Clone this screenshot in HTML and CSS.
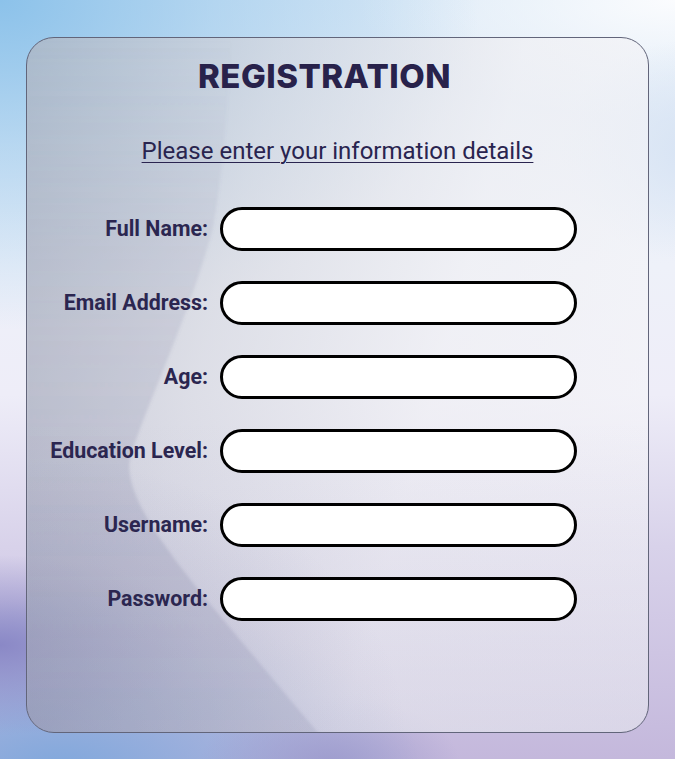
FILE: index.html
```html
<!DOCTYPE html>
<html>
<head>
<meta charset="utf-8">
<link rel="stylesheet" href="styles.css">
</head>
<body>
<div class="page">
  <div class="card">
    <svg class="decor" width="623" height="696" viewBox="0 0 623 696" aria-hidden="true">
      <defs>
        <linearGradient id="fade" x1="0" y1="0" x2="0" y2="1">
          <stop offset="0" stop-color="#6c7096" stop-opacity="0"/>
          <stop offset="0.3" stop-color="#6c7096" stop-opacity="0.12"/>
          <stop offset="0.7" stop-color="#6c7096" stop-opacity="0.2"/>
          <stop offset="1" stop-color="#6c7096" stop-opacity="0.16"/>
        </linearGradient>
        <filter id="blur" x="-20%" y="-20%" width="140%" height="140%"><feGaussianBlur stdDeviation="1.5"/></filter>
      </defs>
      <path d="M0 0 L205 0 C200 80 195 140 186 190 C162 280 118 370 103 420 C97 452 128 498 178 560 L292 696 L0 696 Z" fill="url(#fade)" filter="url(#blur)"/>
    </svg>
    <h1 class="title">REGISTRATION</h1>
    <p class="subtitle">Please enter your information details</p>
    <form class="form">
      <label class="label" for="f1">Full Name:</label><input class="field" id="f1" type="text">
      <label class="label" for="f2">Email Address:</label><input class="field" id="f2" type="text">
      <label class="label" for="f3">Age:</label><input class="field" id="f3" type="text">
      <label class="label" for="f4">Education Level:</label><input class="field" id="f4" type="text">
      <label class="label" for="f5">Username:</label><input class="field" id="f5" type="text">
      <label class="label" for="f6">Password:</label><input class="field" id="f6" type="password">
    </form>
  </div>
</div>
</body>
</html>
```

FILE: styles.css
```css
html, body {
  margin: 0;
  padding: 0;
}
body {
  width: 675px;
  height: 759px;
  overflow: hidden;
  font-family: Roboto, "Liberation Sans", sans-serif;
  color: #29244f;
}
.page {
  width: 675px;
  height: 759px;
  padding: 37px 0 0 26px;
  box-sizing: border-box;
  background:
    radial-gradient(ellipse 130px 70px at 330px 765px, rgba(156,154,204,0.9) 0%, rgba(156,154,204,0) 100%),
    radial-gradient(ellipse 200px 90px at 0px 645px, #8a88c6 0%, rgba(138,136,198,0) 100%),
    radial-gradient(ellipse 360px 170px at 60px 770px, #80a8dc 0%, rgba(128,168,220,0) 100%),
    radial-gradient(ellipse 480px 330px at 0px 0px, #8cc2ea 0%, rgba(140,194,234,0.5) 45%, rgba(140,194,234,0) 100%),
    radial-gradient(ellipse 130px 110px at 690px 150px, #d8e4f4 0%, rgba(216,228,244,0) 100%),
    radial-gradient(ellipse 320px 120px at 675px 0px, #fbfcfe 0%, rgba(251,252,254,0) 100%),
    linear-gradient(180deg, #dbe9f6 0%, #eef1f9 35%, #eeedf8 52%, #d8d2ea 72%, #c4b8dc 100%);
}
.card {
  position: relative;
  width: 623px;
  height: 696px;
  box-sizing: border-box;
  border: 1.5px solid #62657a;
  border-radius: 28px;
  overflow: hidden;
  background:
    radial-gradient(ellipse 380px 280px at 0px 700px, rgba(110,116,160,0.3) 0%, rgba(110,116,160,0) 100%),
    linear-gradient(180deg, rgba(255,255,255,0) 55%, rgba(140,140,180,0.12) 100%),
    linear-gradient(105deg, rgba(176,182,194,0.75) 0%, rgba(214,216,224,0.72) 32%, rgba(240,240,244,0.74) 62%, rgba(247,247,250,0.62) 100%);
}
.decor {
  position: absolute;
  left: 0;
  top: 0;
}
.title {
  position: relative;
  margin: 18px 0 0 -26px;
  text-align: center;
  font-family: Inter, "Open Sans", sans-serif;
  font-weight: 800;
  font-size: 33px;
  line-height: 40px;
  letter-spacing: 0.5px;
  color: #28224b;
}
.subtitle {
  position: relative;
  margin: 41px 0 0 0;
  text-align: center;
  font-size: 24px;
  line-height: 28px;
  text-decoration: underline;
  text-underline-offset: 3px;
  text-decoration-thickness: 1px;
  color: #29244f;
}
.form {
  position: relative;
  display: grid;
  grid-template-columns: 181px 357px;
  column-gap: 12px;
  row-gap: 30px;
  margin-top: 42px;
  align-items: center;
}
.label {
  text-align: right;
  font-weight: 700;
  font-size: 21.4px;
  line-height: 26px;
  color: #2b2650;
}
.field {
  box-sizing: border-box;
  width: 357px;
  height: 44px;
  margin: 0;
  border: 3px solid #000;
  border-radius: 22px;
  background: #fff;
  outline: none;
  padding: 0 14px;
}
```
